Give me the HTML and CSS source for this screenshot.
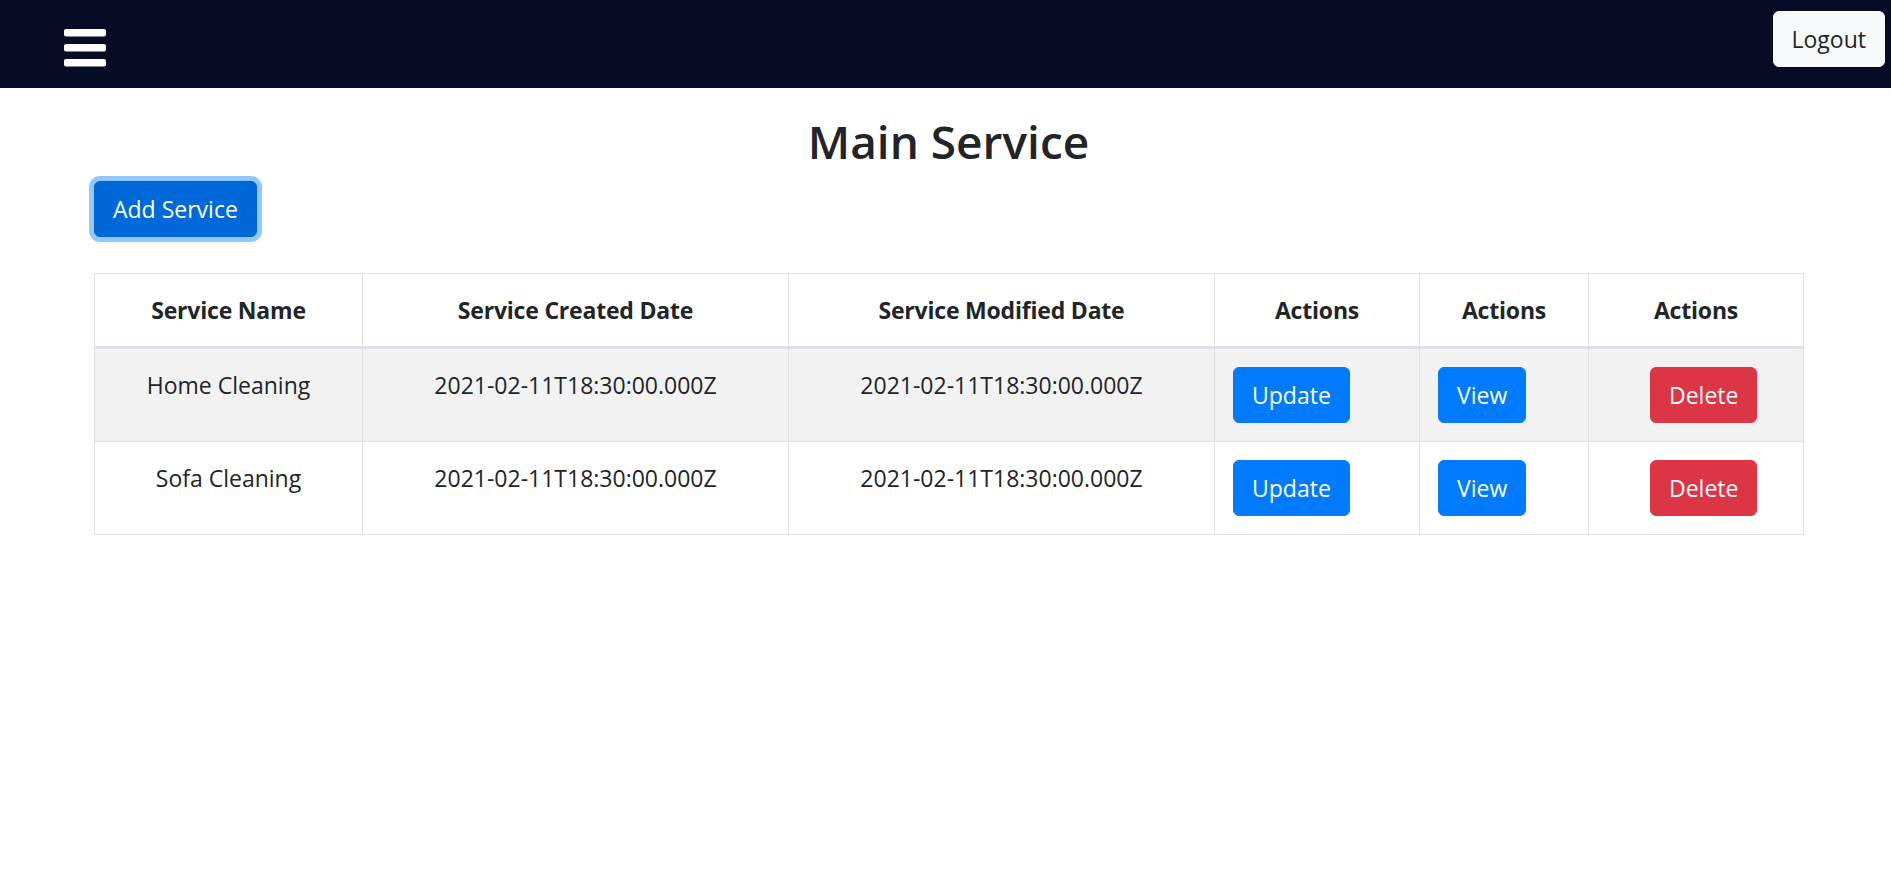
FILE: index.html
```html
<!DOCTYPE html>
<html lang="en">
<head>
<meta charset="utf-8">
<title>Main Service</title>
<link rel="stylesheet" href="styles.css">
</head>
<body>
<nav class="navbar">
  <a class="menu-bars" href="#" aria-label="menu">
    <svg width="42" height="38" viewBox="0 0 42 38" aria-hidden="true">
      <rect x="0" y="0" width="42" height="7.5" rx="2" fill="#fff"/>
      <rect x="0" y="15" width="42" height="7.5" rx="2" fill="#fff"/>
      <rect x="0" y="30" width="42" height="7.5" rx="2" fill="#fff"/>
    </svg>
  </a>
  <button class="btn btn-light logout">Logout</button>
</nav>
<main class="content">
  <h1 class="title">Main Service</h1>
  <button class="btn btn-primary btn-focus">Add Service</button>
  <table class="table">
    <colgroup>
      <col class="c1"><col class="c2"><col class="c3"><col class="c4"><col class="c5"><col class="c6">
    </colgroup>
    <thead>
      <tr>
        <th>Service Name</th>
        <th>Service Created Date</th>
        <th>Service Modified Date</th>
        <th>Actions</th>
        <th>Actions</th>
        <th>Actions</th>
      </tr>
    </thead>
    <tbody>
      <tr class="striped">
        <td>Home Cleaning</td>
        <td>2021-02-11T18:30:00.000Z</td>
        <td>2021-02-11T18:30:00.000Z</td>
        <td class="act"><button class="btn btn-primary">Update</button></td>
        <td class="act"><button class="btn btn-primary">View</button></td>
        <td class="act"><button class="btn btn-danger del">Delete</button></td>
      </tr>
      <tr>
        <td>Sofa Cleaning</td>
        <td>2021-02-11T18:30:00.000Z</td>
        <td>2021-02-11T18:30:00.000Z</td>
        <td class="act"><button class="btn btn-primary">Update</button></td>
        <td class="act"><button class="btn btn-primary">View</button></td>
        <td class="act"><button class="btn btn-danger del">Delete</button></td>
      </tr>
    </tbody>
  </table>
</main>
</body>
</html>
```
FILE: styles.css
```css
* { box-sizing: border-box; }
html, body { margin: 0; padding: 0; }
body {
  font-family: "Open Sans", "Noto Sans", "Liberation Sans", sans-serif;
  font-size: 23px;
  line-height: 36px;
  color: #212529;
  background: #fff;
}
.navbar {
  height: 88px;
  background: #060b26;
  display: flex;
  justify-content: space-between;
  align-items: flex-start;
  padding: 0 6px 0 64px;
}
.menu-bars { display: block; margin-top: 29px; line-height: 0; }
.btn {
  display: inline-block;
  font-family: inherit;
  font-size: 23px;
  line-height: 36px;
  font-weight: 400;
  padding: 9px 18px;
  border: 1.5px solid transparent;
  border-radius: 6px;
  cursor: pointer;
  text-align: center;
  vertical-align: middle;
}
.btn-light { background: #f8f9fa; border-color: #f8f9fa; color: #212529; }
.logout { margin-top: 11px; }
.btn-primary { background: #007bff; border-color: #007bff; color: #fff; }
.btn-danger { background: #dc3545; border-color: #dc3545; color: #fff; }
.btn-focus {
  background: #0069d9;
  border-color: #0062cc;
  box-shadow: 0 0 0 5px rgba(38, 143, 255, 0.5);
}
.content { margin: 0 88px 0 94px; }
.title {
  margin: 25px 0 10px;
  font-size: 46px;
  line-height: 57.6px;
  font-weight: 600;
  text-align: center;
}
.table {
  margin-top: 36px;
  width: 100%;
  table-layout: fixed;
  border-collapse: collapse;
}
.c1 { width: 268px; }
.c2 { width: 426px; }
.c3 { width: 426px; }
.c4 { width: 205px; }
.c5 { width: 169px; }
.c6 { width: 215px; }
.table th, .table td {
  border: 1px solid #dee2e6;
  padding: 18px;
  text-align: center;
  vertical-align: top;
  line-height: 36px;
}
.table th { font-weight: 700; letter-spacing: -0.2px; }
.table thead th { border-bottom: 3px solid #dee2e6; }
.table tr.striped td { background: rgba(0, 0, 0, 0.05); }
.table td.act { text-align: left; }
.del { margin-left: 43px; }
```
